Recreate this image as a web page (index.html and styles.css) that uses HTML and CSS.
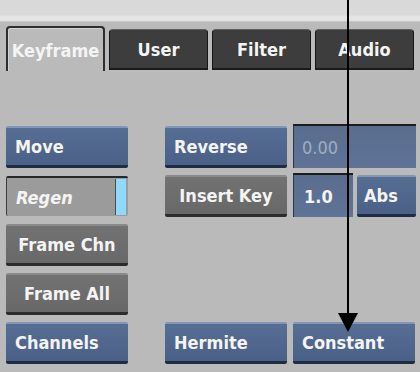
FILE: index.html
```html
<!DOCTYPE html>
<html lang="en">
<head>
    <meta charset="UTF-8">
    <title>Keyframe Editor</title>
    <link rel="stylesheet" href="styles.css">
</head>
<body>

<div id="editor">
    <div class="top-band"></div>

    <div class="tabs">
        <div class="tab active">Keyframe</div>
        <div class="tab">User</div>
        <div class="tab">Filter</div>
        <div class="tab">Audio</div>
    </div>

    <div class="panel">
        <div class="btn blue">Move</div>
        <div class="btn blue">Reverse</div>
        <div class="field dim">0.00</div>

        <div class="btn toggle"><span>Regen</span><i class="led"></i></div>
        <div class="btn grey centered">Insert Key</div>
        <div class="pair">
            <div class="field short">1.0</div>
            <div class="btn blue">Abs</div>
        </div>

        <div class="btn grey centered">Frame Chn</div>
        <div></div>
        <div></div>

        <div class="btn grey centered">Frame All</div>
        <div></div>
        <div></div>

        <div class="btn blue">Channels</div>
        <div class="btn blue">Hermite</div>
        <div class="btn blue">Constant</div>
    </div>

    <!-- callout arrow pointing at Constant -->
    <div class="arrow-line"></div>
    <div class="arrow-head"></div>
</div>

</body>
</html>
```

FILE: styles.css
```css
body {
    margin: 0;
    font-family: "DejaVu Sans Condensed", "DejaVu Sans", sans-serif;
    font-weight: bold;
    font-size: 18px;
    color: #f4f4f4;
    background-color: #bababa;
}

#editor {
    position: relative;
    width: 420px;
    height: 372px;
    overflow: hidden;
    background-color: #bababa;
}

.top-band {
    height: 22px;
    background: linear-gradient(#d9d9d9 0, #dadada 15px, #e6e6e6 17px, #e2e2e2 21px);
    border-bottom: 1px solid #c8c8c8;
    box-sizing: border-box;
}

.tabs {
    display: flex;
    align-items: flex-end;
    gap: 4px;
    padding: 4px 0 0 6px;
    height: 49px;
    box-sizing: border-box;
}

.tab {
    width: 99px;
    height: 41px;
    box-sizing: border-box;
    display: flex;
    align-items: center;
    justify-content: center;
    background-color: #3d3d3d;
    border: 1px solid #161616;
    border-top-color: #5e5e5e;
    border-bottom: 2px solid #1a1a1a;
    border-radius: 4px 4px 0 0;
    margin-bottom: 1px;
}

.tab.active {
    height: 45px;
    margin-bottom: 0;
    background-color: #bababa;
    border: 2px solid #2e2e2e;
    border-bottom: none;
    box-shadow: inset 1px 1px 0 #d2d2d2;
    padding-top: 2px;
}

.panel {
    display: grid;
    grid-template-columns: 153px 122px 123px;
    grid-auto-rows: 42px;
    column-gap: 6px;
    row-gap: 7px;
    padding: 55px 0 0 6px;
}

.btn,
.field {
    box-sizing: border-box;
    display: flex;
    align-items: center;
    padding-left: 9px;
    width: 122px;
    border-radius: 2px;
}

.btn.blue {
    background: linear-gradient(#566d94, #4a6087);
    border-top: 2px solid #8396b6;
    border-bottom: 3px solid #1f2c44;
}

.btn.grey {
    background: linear-gradient(#727272, #686868);
    border-top: 2px solid #8a8a8a;
    border-bottom: 3px solid #2c2c2c;
}

.btn.centered {
    justify-content: center;
    padding-left: 0;
}

.btn.toggle {
    justify-content: space-between;
    padding-right: 2px;
    background-color: #9b9b9b;
    border-top: 2px solid #282828;
    border-left: 1px solid #3a3a3a;
    font-style: italic;
    height: 40px;
    margin-top: 1px;
}

.led {
    width: 10px;
    height: 36px;
    background-color: #8fd9fd;
    border-left: 1px solid #4a4a4a;
}

.field {
    width: 123px;
    padding-left: 8px;
    background: linear-gradient(#5a6d8e, #5e7397);
    border-top: 2px solid #1c1c1c;
    border-left: 1px solid #2c3446;
    border-radius: 0;
}

.field.dim {
    color: #9eaec6;
    font-weight: normal;
    margin-top: -2px;
}

.pair {
    display: flex;
    gap: 4px;
}

.pair .field.short {
    width: 60px;
    padding-left: 10px;
    margin-top: -2px;
}

.pair .btn {
    width: 59px;
    padding-left: 7px;
}

.arrow-line {
    position: absolute;
    left: 347px;
    top: 0;
    width: 2px;
    height: 316px;
    background-color: #000;
}

.arrow-head {
    position: absolute;
    left: 338px;
    top: 313px;
    width: 0;
    height: 0;
    border-left: 10px solid transparent;
    border-right: 10px solid transparent;
    border-top: 19px solid #000;
}
```
